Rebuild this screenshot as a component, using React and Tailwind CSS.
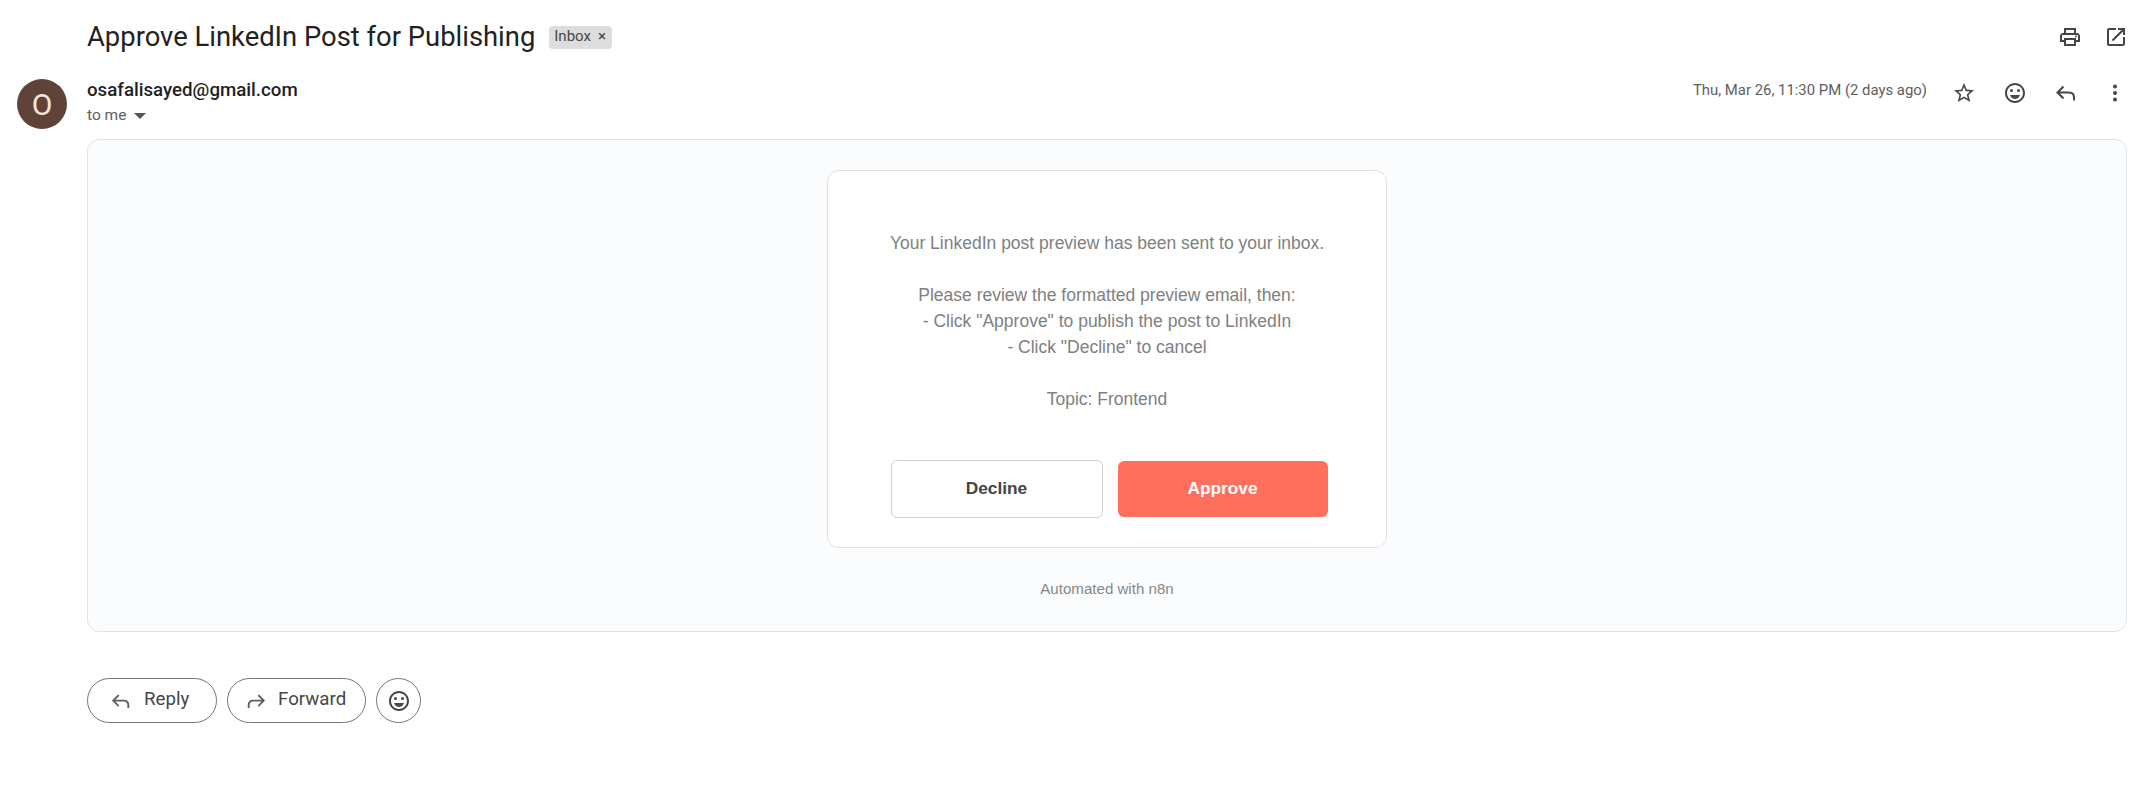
const P = ({ children, className = "" }) => (
  <svg viewBox="0 0 24 24" fill="currentColor" className={className}>{children}</svg>
);
const Print = (p) => (
  <P {...p}>
    <path d="M19 8h-1V3H6v5H5c-1.66 0-3 1.34-3 3v6h4v4h12v-4h4v-6c0-1.66-1.34-3-3-3zM8 5h8v3H8V5zm8 12v2H8v-4h8v2zm2-2v-2H6v2H4v-4c0-.55.45-1 1-1h14c.55 0 1 .45 1 1v4h-2z" />
    <circle cx="18" cy="11.5" r="1" />
  </P>
);
const Open = (p) => (
  <P {...p}>
    <path d="M19 19H5V5h7V3H5c-1.11 0-2 .9-2 2v14c0 1.1.89 2 2 2h14c1.1 0 2-.9 2-2v-7h-2v7zM14 3v2h3.59l-9.83 9.83 1.41 1.41L19 6.41V10h2V3h-7z" />
  </P>
);
const Star = (p) => (
  <P {...p}>
    <path d="M22 9.24l-7.19-.62L12 2 9.19 8.63 2 9.24l5.46 4.73L5.82 21 12 17.27 18.18 21l-1.63-7.03L22 9.24zM12 15.4l-3.76 2.27 1-4.28-3.32-2.88 4.38-.38L12 6.1l1.71 4.04 4.38.38-3.32 2.88 1 4.28L12 15.4z" />
  </P>
);
const Mood = (p) => (
  <P {...p}>
    <path d="M11.99 2C6.47 2 2 6.48 2 12s4.47 10 9.99 10C17.52 22 22 17.52 22 12S17.52 2 11.99 2zM12 20c-4.42 0-8-3.58-8-8s3.58-8 8-8 8 3.58 8 8-3.58 8-8 8z" />
    <circle cx="15.5" cy="9.5" r="1.5" />
    <circle cx="8.5" cy="9.5" r="1.5" />
    <path d="M12 18c2.28 0 4.22-1.66 5-4H7c.78 2.34 2.72 4 5 4z" />
  </P>
);
const Reply = ({ className = "" }) => (
  <svg viewBox="0 0 24 24" fill="none" stroke="currentColor" strokeWidth="2" className={className}>
    <path d="M9.5 5.5 3.5 11.5l6 6M3.5 11.5H15c3 0 5 2 5 5v3" />
  </svg>
);
const Forward = ({ className = "" }) => (
  <svg viewBox="0 0 24 24" fill="none" stroke="currentColor" strokeWidth="2" className={className}>
    <path d="M14.5 5.5l6 6-6 6M20.5 11.5H9c-3 0-5 2-5 5v3" />
  </svg>
);
const More = (p) => (
  <P {...p}>
    <circle cx="12" cy="5.5" r="2" />
    <circle cx="12" cy="12" r="2" />
    <circle cx="12" cy="18.5" r="2" />
  </P>
);

export default function App() {
  return (
    <div className="h-[795px] w-full overflow-hidden bg-white font-['Roboto',sans-serif]">
      <div className="flex h-[74px] items-center justify-between pl-[87px] pr-[16px]">
        <div className="flex items-center">
          <h1 className="text-[27.4px] leading-[36px] text-[#222222]">Approve LinkedIn Post for Publishing</h1>
          <span className="ml-[14px] flex h-[23px] w-[63px] items-center gap-[7px] rounded-[4px] bg-[#dddddd] pb-[2px] pl-[5px] text-[15px] text-[#444746]">
            Inbox <span className="text-[15px]">×</span>
          </span>
        </div>
        <div className="flex items-center gap-[22px] text-[#444746]">
          <Print className="h-[24px] w-[24px]" />
          <Open className="h-[24px] w-[24px]" />
        </div>
      </div>

      <div className="flex pl-[17px] pr-[17px]">
        <div className="mr-[20px] mt-[5px] flex h-[50px] w-[50px] shrink-0 items-center justify-center rounded-full bg-[#5f4339] text-[30px] text-[#f5e6d8]">
          O
        </div>
        <div className="min-w-0 flex-1">
          <div className="flex h-[65px] items-start justify-between">
            <div className="pt-[4px]">
              <div className="text-[18.7px] font-medium leading-[24px] text-[#1f1f1f]">osafalisayed@gmail.com</div>
              <div className="mt-[2px] flex items-center gap-[8px] text-[15.5px] leading-[22px] text-[#5e5e5e]">
                to me
                <span className="mt-[2px] h-0 w-0 border-x-[6px] border-t-[6px] border-x-transparent border-t-[#555555]" />
              </div>
            </div>
            <div className="flex items-start pt-[4px] text-[#444746]">
              <span className="mr-[25px] text-[14.9px] leading-[24px] text-[#5e5e5e]">Thu, Mar 26, 11:30 PM (2 days ago)</span>
              <Star className="mr-[27px] mt-[3px] h-[24px] w-[24px]" />
              <Mood className="mr-[27px] mt-[3px] h-[24px] w-[24px]" />
              <Reply className="mr-[25px] mt-[3px] h-[24px] w-[24px]" />
              <More className="mt-[3px] h-[24px] w-[24px]" />
            </div>
          </div>

          <div className="flex h-[493px] flex-col items-center rounded-[12px] border border-[#dfe3e6] bg-[#fbfcfe] pt-[30px] font-['Liberation_Sans',sans-serif]">
            <div className="h-[378px] w-[560px] rounded-[12px] border border-[#dfe1e5] bg-white pt-[59px]">
              <p className="text-center text-[17.5px] leading-[26px] text-[#808080]">
                Your LinkedIn post preview has been sent to your inbox.
                <br />
                <br />
                Please review the formatted preview email, then:
                <br />- Click "Approve" to publish the post to LinkedIn
                <br />- Click "Decline" to cancel
                <br />
                <br />
                Topic: Frontend
              </p>
              <div className="mt-[48px] flex items-center justify-center gap-[15px] pl-[4px]">
                <div className="flex h-[58px] w-[212px] items-center justify-center rounded-[6px] border border-[#d0d0d0] bg-white text-[17.3px] font-bold text-[#444444]">
                  Decline
                </div>
                <div className="flex h-[56px] w-[210px] items-center justify-center rounded-[6px] bg-[#ff6f5e] text-[17.3px] font-bold text-white">
                  Approve
                </div>
              </div>
            </div>
            <div className="mt-[31px] text-[15.1px] leading-[20px] text-[#888888]">Automated with n8n</div>
          </div>

          <div className="mt-[46px] flex gap-[10px] text-[#444746]">
            <div className="flex h-[45px] w-[130px] items-center rounded-full border border-[#747775] pb-[2px] pl-[22px] text-[18.7px]">
              <Reply className="mr-[12px] mt-[2px] h-[22px] w-[22px] text-[#5e5e5e]" />
              Reply
            </div>
            <div className="flex h-[45px] w-[139px] items-center rounded-full border border-[#747775] pb-[2px] pl-[17px] text-[18.7px]">
              <Forward className="mr-[11px] mt-[2px] h-[22px] w-[22px] text-[#5e5e5e]" />
              Forward
            </div>
            <div className="flex h-[45px] w-[45px] items-center justify-center rounded-full border border-[#747775]">
              <Mood className="h-[24px] w-[24px]" />
            </div>
          </div>
        </div>
      </div>
    </div>
  );
}
